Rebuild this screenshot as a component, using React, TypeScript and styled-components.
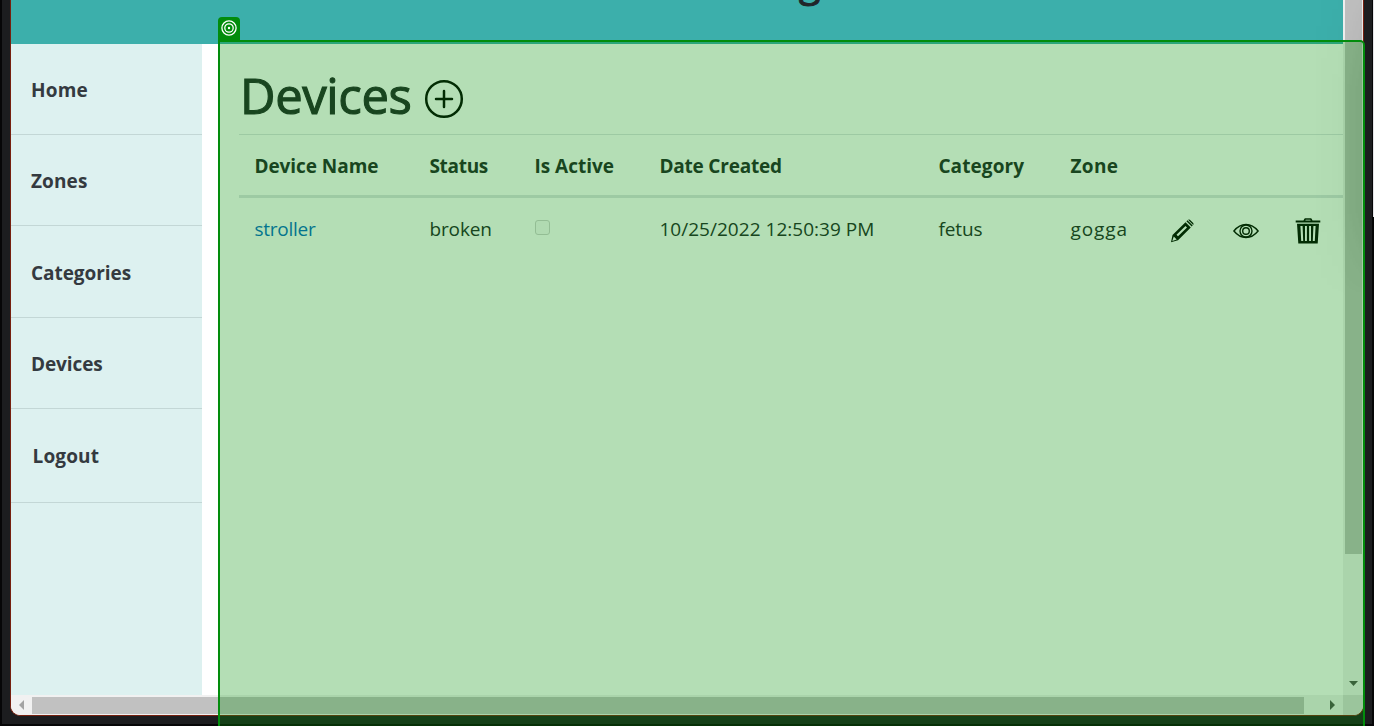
import React from "react";
import styled, { createGlobalStyle } from "styled-components";

const Global = createGlobalStyle`
  * { box-sizing: border-box; }
  html, body { margin: 0; width: 1374px; height: 726px; overflow: hidden; background: #000; }
  body { font-family: "Open Sans", "Noto Sans", sans-serif; color: #212529; }
`;

const Desktop = styled.div`
  position: relative;
  width: 1374px;
  height: 726px;
  overflow: hidden;
  padding: 0 2px 2px;
  background: #060607;
`;
const Bezel = styled.div`
  height: 724px;
  padding: 0 8px 8px;
  background: #1c1d1f;
`;
const Screen = styled.div`
  display: grid;
  grid-template-columns: 1332px 20px;
  grid-template-rows: 695px 20px;
  width: 1354px;
  height: 716px;
  border: 1px solid #76200f;
  border-top: 0;
  border-radius: 0 0 10px 10px;
  overflow: hidden;
  background: #fff;
`;
const Page = styled.div`
  display: flex;
  flex-direction: column;
  overflow: hidden;
`;
const Header = styled.header`
  flex: 0 0 44px;
  overflow: hidden;
  background: #3cafab;
  text-align: center;
`;
const Brand = styled.div`
  margin-top: -43px;
  padding-left: 265px;
  font-size: 40px;
  line-height: 48px;
  font-weight: 500;
  -webkit-text-stroke: 1px #212529;
`;
const Body = styled.div`
  flex: 1;
  display: flex;
`;
const Sidebar = styled.nav`
  width: 191px;
  background: #ddf1f0;
`;
const NavItem = styled.a<{ $h: number; $indent?: number; $drop?: number; $ls?: number }>`
  display: flex;
  align-items: center;
  height: ${(p) => p.$h}px;
  padding-left: ${(p) => 20 + (p.$indent ?? 0)}px;
  padding-top: ${(p) => 1 + (p.$drop ?? 0)}px;
  border-bottom: 1px solid #c3d7d6;
  color: #343a40;
  font-size: 19px;
  font-weight: 700;
  letter-spacing: ${(p) => p.$ls ?? 0}px;
`;
const Main = styled.main`
  flex: 1;
  padding-left: 37px;
`;
const TitleRow = styled.div`
  display: flex;
  align-items: center;
  height: 91px;
  padding-top: 14px;
  border-bottom: 1px solid #dee2e6;

  svg {
    margin-top: 5px;
  }
`;
const Title = styled.h1`
  width: 185px;
  margin: 0;
  padding: 0 0 3px 1px;
  font-size: 49px;
  font-weight: 500;
  line-height: 60px;
  letter-spacing: -0.4px;
  white-space: nowrap;
  -webkit-text-stroke: 1.1px #212529;
`;
const Row = styled.div<{ $head?: boolean }>`
  display: grid;
  grid-template-columns: 175px 105px 125px 279px 132px 100px 63px 62px 47px;
  align-items: center;
  height: ${(p) => (p.$head ? 63 : 64)}px;
  padding-left: 15px;
  padding-top: ${(p) => (p.$head ? 2 : 0)}px;
  border-bottom: ${(p) => (p.$head ? "3px solid #dee2e6" : "0")};
  font-size: 19px;
  font-weight: ${(p) => (p.$head ? 700 : 400)};
  white-space: nowrap;
`;
const Cell = styled.span<{ $ls?: number; $link?: boolean }>`
  display: flex;
  padding-left: 0.4px;
  letter-spacing: ${(p) => p.$ls ?? 0}px;
  color: ${(p) => (p.$link ? "#0368c8" : "inherit")};
`;
const DataRow = styled(Row)`
  ${Cell} {
    margin-top: -2px;
  }
  svg {
    margin-top: 1px;
  }
`;
const Check = styled.span`
  width: 15px;
  height: 15px;
  margin-top: -5px;
  margin-left: 0.5px;
  border: 1px solid #d0d0d0;
  border-radius: 3px;
  background: #fafafa;
`;
const VTrack = styled.div`
  display: flex;
  flex-direction: column;
  justify-content: space-between;
  align-items: flex-start;
  padding: 0 1px 9px 2px;
  background: #f1f1f1;

  svg {
    margin-left: 4px;
  }
`;
const VThumb = styled.div`
  width: 17px;
  height: 554px;
  background: #c1c1c1;
`;
const HTrack = styled.div`
  display: flex;
  align-items: center;
  padding: 0 7px 0 8px;
  background: #f1f1f1;
`;
const HThumb = styled.div`
  width: 1272px;
  height: 17px;
  margin-left: 8px;
  margin-right: 26px;
  background: #c1c1c1;
`;
const Arrow = styled.svg`
  display: block;
  flex: none;
`;
const Corner = styled.div`
  background: #dcdcdc;
`;
const Shade = styled.div`
  position: absolute;
  left: 1313px;
  top: 0;
  width: 50px;
  height: 300px;
  background: linear-gradient(90deg, transparent, rgba(0, 0, 0, 0.02) 55%, rgba(0, 0, 0, 0.08));
  mask-image: linear-gradient(rgba(0, 0, 0, 0.3), #000 30%, #000 70%, transparent);
`;
const Overlay = styled.div`
  position: absolute;
  left: 218px;
  top: 40px;
  width: 1147px;
  height: 700px;
  border: 2px solid #028c0c;
  border-radius: 0 5px 0 0;
  background: rgba(8, 145, 10, 0.302);
  background-clip: padding-box;
`;
const Tag = styled.div`
  position: absolute;
  left: 218px;
  top: 17px;
  display: flex;
  align-items: center;
  justify-content: center;
  width: 22px;
  height: 23px;
  padding: 0 1px 1px 0;
  border-radius: 4px 4px 0 0;
  background: #028c0c;
`;
const Outside = styled.div`
  position: absolute;
  right: 0;
  top: 0;
  width: 1px;
  height: 217px;
  background: #e4e4e8;
`;

const nav = [
  { label: "Home", h: 91, ls: 0.2 },
  { label: "Zones", h: 91, ls: 0.1 },
  { label: "Categories", h: 92, drop: 1, ls: -0.05 },
  { label: "Devices", h: 91, ls: -0.1 },
  { label: "Logout", h: 94, indent: 1.5, ls: 0.15 },
];

const PlusCircle = () => (
  <svg width="40" height="40" viewBox="0 0 40 40" fill="none" stroke="#000" strokeWidth="2.5">
    <circle cx="20" cy="20" r="17.8" />
    <path d="M20 12v16M12 20h16" strokeLinecap="round" />
  </svg>
);
const Pencil = () => (
  <svg width="24" height="24" viewBox="0 0 24 24" fill="#000">
    <path fillRule="evenodd" d="M1 23.2 2.5 16 15.5 3.2l5.3 5.3L8 21.3ZM2.3 21.9l4.4-1.5-2.9-2.9ZM8 17.2l9-8.6-1.5-1.5-9 8.6Z" />
    <path d="m16.4 2.3 1-1 5.3 5.3-1 1ZM18.1.8q.8-.8 1.8 0l3.3 3.3q.8.9 0 1.8Z" />
  </svg>
);
const Eye = () => (
  <svg width="26" height="16" viewBox="0 0 26 16" fill="none" stroke="#000" strokeWidth="1.4">
    <path d="M.9 8C4.5 3.6 8.5 1.5 13 1.5S21.5 3.6 25.1 8c-3.6 4.4-7.6 6.5-12.1 6.5S4.5 12.4.9 8Z" />
    <circle cx="13" cy="8" r="6" />
    <circle cx="13" cy="8" r="3.3" />
  </svg>
);
const Trash = () => (
  <svg width="26" height="26" viewBox="0 0 26 26" fill="#000">
    <path fillRule="evenodd" d="M8.5 2.6 9.3.7q.2-.4.8-.4h5.8q.6 0 .8.4l.8 1.9H25.3v2H.7v-2ZM10.3 2.6h5.4l-.5-.9h-4.4Z" />
    <path fillRule="evenodd" d="M2 5.8h22L22.7 25.5H3.3ZM5.4 8l.8 15h2L7.6 8ZM10 8v15h1.9V8ZM14.1 8v15H16V8ZM18.4 8l-.6 15h2l.8-15Z" />
  </svg>
);
const Target = () => (
  <svg width="16" height="16" viewBox="0 0 16 16" fill="none" stroke="#fff" strokeWidth="1.3">
    <circle cx="8" cy="8" r="7.1" />
    <circle cx="8" cy="8" r="4.2" />
    <circle cx="8" cy="8" r="1.2" fill="#fff" stroke="none" />
  </svg>
);

export default function App() {
  return (
    <Desktop>
      <Global />
      <Bezel>
        <Screen>
          <Page>
            <Header>
              <Brand>g</Brand>
            </Header>
            <Body>
              <Sidebar>
                {nav.map((n) => (
                  <NavItem key={n.label} $h={n.h} $indent={n.indent} $drop={n.drop} $ls={n.ls}>
                    {n.label}
                  </NavItem>
                ))}
              </Sidebar>
              <Main>
                <TitleRow>
                  <Title>Devices</Title>
                  <PlusCircle />
                </TitleRow>
                <Row $head>
                  <Cell $ls={-0.05}>Device Name</Cell>
                  <Cell $ls={-0.3}>Status</Cell>
                  <Cell>Is Active</Cell>
                  <Cell $ls={-0.2}>Date Created</Cell>
                  <Cell $ls={0.1}>Category</Cell>
                  <Cell $ls={0.4}>Zone</Cell>
                </Row>
                <DataRow>
                  <Cell $link $ls={-0.25}>stroller</Cell>
                  <Cell $ls={-0.1}>broken</Cell>
                  <Check />
                  <Cell $ls={0.03}>10/25/2022 12:50:39 PM</Cell>
                  <Cell $ls={-0.1}>fetus</Cell>
                  <Cell $ls={0.95}>gogga</Cell>
                  <Pencil />
                  <Eye />
                  <Trash />
                </DataRow>
              </Main>
            </Body>
          </Page>
          <VTrack>
            <VThumb />
            <Arrow width="9" height="5" viewBox="0 0 9 5" fill="#505050">
              <path d="M0 0h9L4.5 5Z" />
            </Arrow>
          </VTrack>
          <HTrack>
            <Arrow width="5" height="10" viewBox="0 0 5 10" fill="#a3a3a3">
              <path d="M5 0v10L0 5Z" />
            </Arrow>
            <HThumb />
            <Arrow width="5" height="10" viewBox="0 0 5 10" fill="#505050">
              <path d="M0 0v10l5-5Z" />
            </Arrow>
          </HTrack>
          <Corner />
        </Screen>
      </Bezel>
      <Shade />
      <Overlay />
      <Tag>
        <Target />
      </Tag>
      <Outside />
    </Desktop>
  );
}
